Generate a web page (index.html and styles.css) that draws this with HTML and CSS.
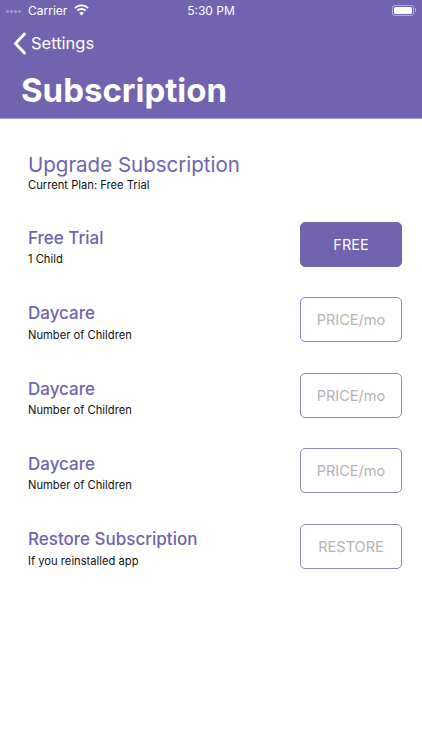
FILE: index.html
```html
<!DOCTYPE html>
<html lang="en">
<head>
<meta charset="utf-8">
<title>Subscription</title>
<link rel="stylesheet" href="styles.css">
</head>
<body>
<header class="header">
  <div class="status">
    <div class="status-left">
      <span class="dots"><i></i><i></i><i></i><i></i></span>
      <span class="carrier">Carrier</span>
      <svg class="wifi" width="17" height="12" viewBox="0 0 17 12"><path d="M8.5 2.3c2.3 0 4.4.9 6 2.4l1.2-1.3C13.8 1.5 11.3.4 8.5.4S3.2 1.5 1.300 3.400l1.200 1.300c1.600-1.500 3.700-2.400 6-2.400z" fill="#fff"/><path d="M8.500 6c1.300 0 2.500.5 3.400 1.300l1.300-1.300C12 4.800 10.300 4.100 8.500 4.100S5 4.800 3.800 6l1.300 1.300C6 6.500 7.200 6 8.500 6z" fill="#fff"/><path d="M8.500 11.600l2.400-2.600c-.6-.6-1.500-1-2.400-1s-1.800.4-2.400 1z" fill="#fff"/></svg>
    </div>
    <span class="time">5:30 PM</span>
    <div class="battery"><span class="battery-body"><span class="battery-fill"></span></span><span class="battery-cap"></span></div>
  </div>
  <div class="nav">
    <svg class="chevron" width="14" height="23" viewBox="0 0 14 23"><path d="M11.500 2L2.500 11.500L11.500 21" fill="none" stroke="#fff" stroke-width="3" stroke-linecap="round" stroke-linejoin="round"/></svg>
    <span class="back">Settings</span>
  </div>
  <h1 class="title">Subscription</h1>
</header>
<main class="content">
  <section class="intro">
    <h2 class="intro-title">Upgrade Subscription</h2>
    <p class="sub">Current Plan: Free Trial</p>
  </section>
  <div class="plans">
    <div class="plan">
      <div class="plan-text"><h3 class="plan-name">Free Trial</h3><p class="sub">1 Child</p></div>
      <button class="btn btn-filled">FREE</button>
    </div>
    <div class="plan">
      <div class="plan-text"><h3 class="plan-name">Daycare</h3><p class="sub">Number of Children</p></div>
      <button class="btn">PRICE/mo</button>
    </div>
    <div class="plan">
      <div class="plan-text"><h3 class="plan-name">Daycare</h3><p class="sub">Number of Children</p></div>
      <button class="btn">PRICE/mo</button>
    </div>
    <div class="plan">
      <div class="plan-text"><h3 class="plan-name">Daycare</h3><p class="sub">Number of Children</p></div>
      <button class="btn">PRICE/mo</button>
    </div>
    <div class="plan">
      <div class="plan-text"><h3 class="plan-name">Restore Subscription</h3><p class="sub">If you reinstalled app</p></div>
      <button class="btn">RESTORE</button>
    </div>
  </div>
</main>
</body>
</html>
```
FILE: styles.css
```css
* { box-sizing: border-box; }
html, body { margin: 0; padding: 0; }
body {
  width: 422px;
  height: 750px;
  overflow: hidden;
  background: #fff;
  font-family: Inter, "Liberation Sans", sans-serif;
  color: #111;
}
.header {
  height: 119px;
  background: #7163b0;
  color: #fff;
  border-bottom: 1px solid #a9a2cc;
}
.status {
  height: 20px;
  padding: 0 6px 0 6px;
  display: grid;
  grid-template-columns: 1fr auto 1fr;
  align-items: center;
  font-size: 12px;
}
.status-left { display: flex; align-items: center; }
.dots { display: flex; gap: 1px; width: 22px; margin-top: 3px; }
.dots i { width: 3px; height: 3px; border-radius: 50%; background: rgba(255,255,255,.35); }
.carrier { font-size: 12px; }
.wifi { margin-left: 6px; }
.time { font-size: 12px; font-weight: 400; }
.battery { justify-self: end; display: flex; align-items: center; gap: 1px; }
.battery-body { width: 22px; height: 11px; border: 1px solid rgba(255,255,255,.45); border-radius: 3px; padding: 1px; display: flex; }
.battery-fill { flex: 1; background: #fff; border-radius: 1.500px; }
.battery-cap { width: 1px; height: 4px; background: rgba(255,255,255,.5); }
.nav {
  height: 46px;
  padding-left: 13px;
  display: flex;
  align-items: center;
  gap: 4px;
}
.back { font-size: 16.500px; }
.title {
  margin: 0;
  padding-left: 21px;
  font-size: 33px;
  line-height: 49px;
  font-weight: 700;
}
.content { padding: 33px 20px 0 28px; }
.intro-title {
  margin: 0;
  font-size: 20.500px;
  line-height: 26px;
  font-weight: 400;
  color: #7163b0;
}
.sub { margin: 0; font-size: 11.200px; line-height: 14px; color: #111; }
.plans { margin-top: 30px; display: flex; flex-direction: column; gap: 30.400px; }
.plan { display: flex; justify-content: space-between; align-items: center; height: 45px; }
.plan-text { padding-top: 4px; }
.plan-name {
  margin: 0 0 3.500px;
  font-size: 17px;
  line-height: 22px;
  font-weight: 500;
  color: #7163b0;
}
.btn {
  width: 102px;
  height: 45px;
  border: 1.500px solid #8f84bf;
  border-radius: 5px;
  background: #fff;
  color: #b4b4b4;
  font-family: inherit;
  font-size: 14.500px;
  padding: 0;
}
.btn-filled { background: #7163b0; border-color: #7163b0; color: #fff; }
```
